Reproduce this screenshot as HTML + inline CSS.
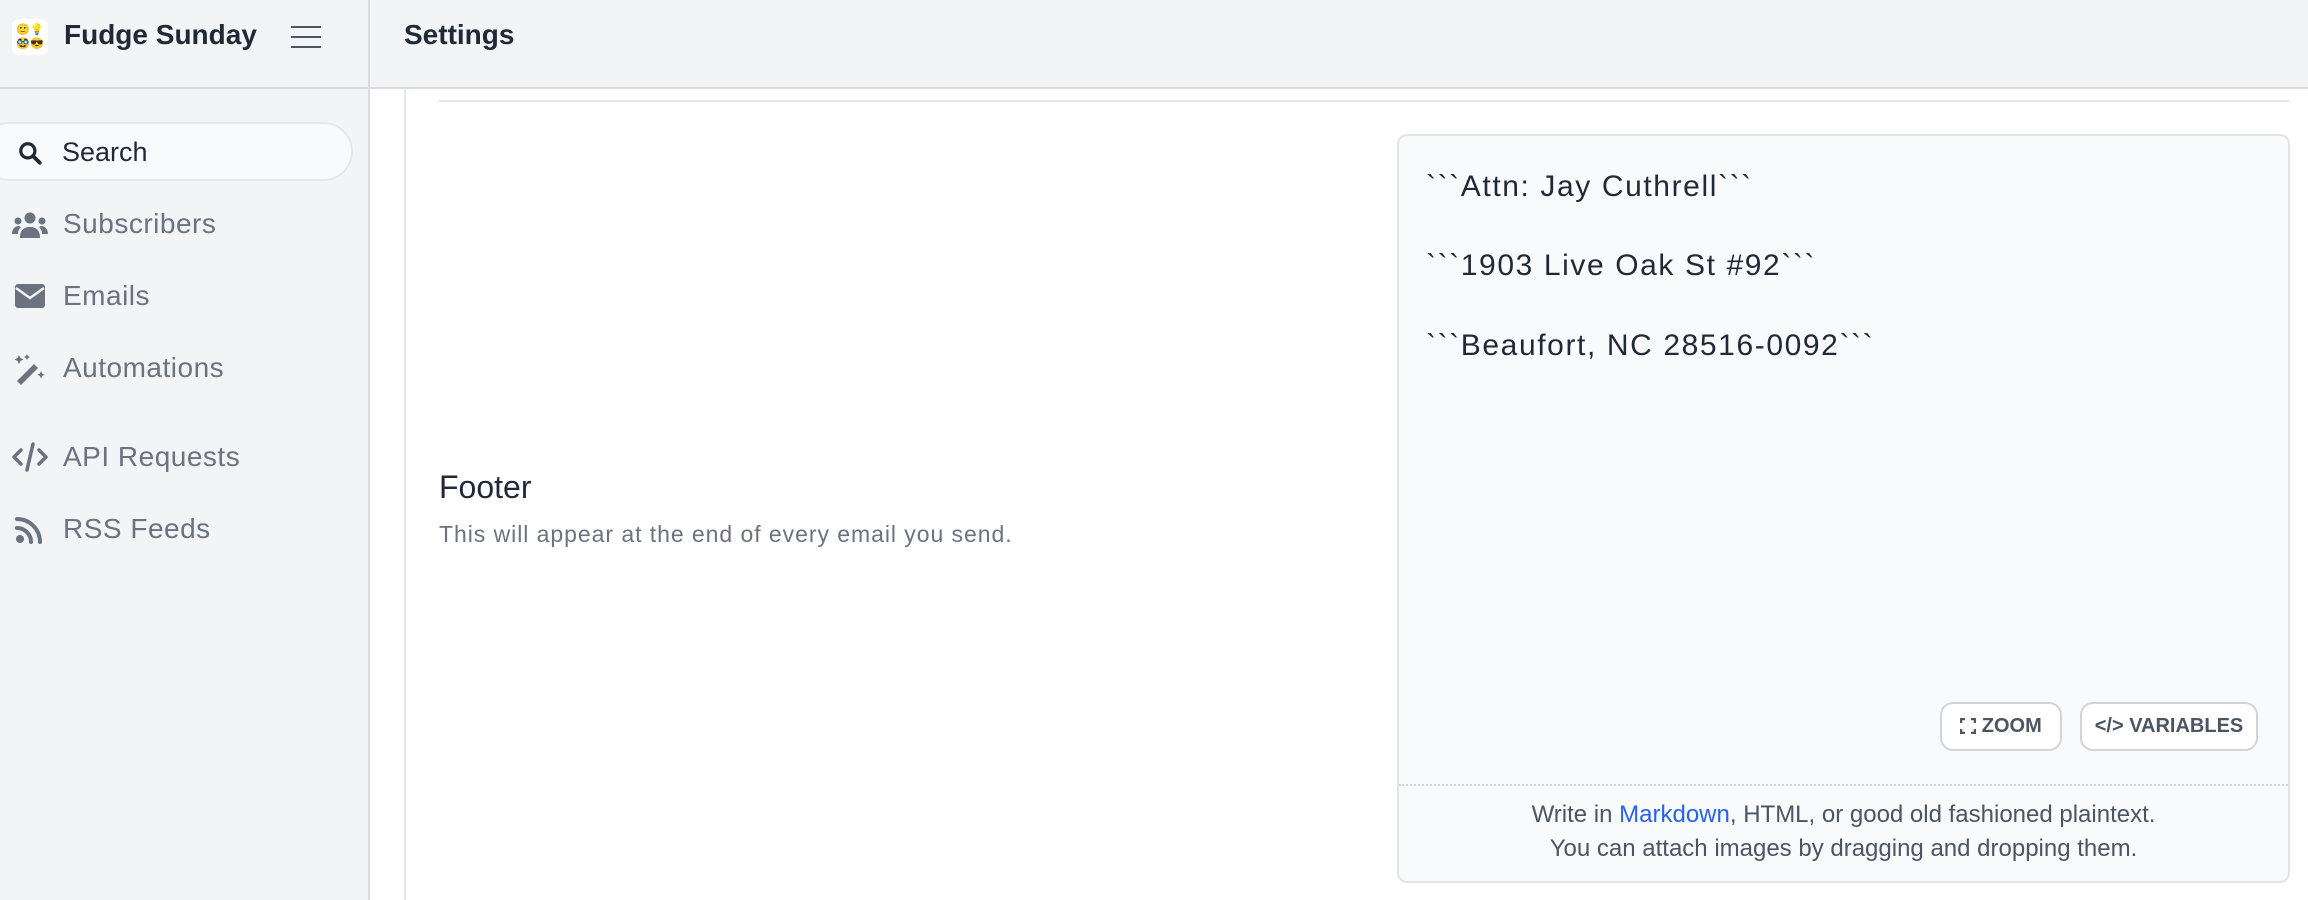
<!DOCTYPE html>
<html><head><meta charset="utf-8"><style>
*{box-sizing:border-box;margin:0;padding:0}
body{width:2308px;height:900px;overflow:hidden;background:#fff;font-family:"Liberation Sans",sans-serif;position:relative}
.hdr{position:absolute;left:0;top:0;width:2308px;height:89px;background:#f3f4f6;border-bottom:2px solid #d9dce1}
.side{position:absolute;left:0;top:89px;width:370px;height:811px;background:#f3f4f6;border-right:2px solid #d9dce1}
.vdiv{position:absolute;left:368px;top:0;width:2px;height:89px;background:#d9dce1}
.logo{position:absolute;left:12px;top:19px;width:36px;height:36px;background:#fff;border-radius:7px;font-size:11px;line-height:14px;text-align:center;padding-top:4px}
.brand{position:absolute;left:64px;top:19px;font-size:28px;font-weight:bold;color:#1f2937}
.ham{position:absolute;left:291px;top:26px;width:30px}
.ham i{display:block;height:2px;background:#4b5563;margin-bottom:8px}
.title{position:absolute;left:404px;top:19px;font-size:28px;font-weight:bold;color:#1f2937}
.search{position:absolute;left:-20px;top:122px;width:373px;height:59px;border:2px solid #e5e7eb;border-radius:30px;background:#f9fafb}
.search span{position:absolute;left:80px;top:13px;font-size:27px;color:#1f2937}
.nav{position:absolute;left:63px;font-size:28px;letter-spacing:0.5px;color:#6b7280}
.ic{position:absolute;left:12px}
.inner{position:absolute;left:404px;top:89px;width:2px;height:811px;background:#e5e7eb}
.hr{position:absolute;left:439px;top:100px;width:1850px;height:2px;background:#e5e7eb}
.lbl{position:absolute;left:439px;top:469px;font-size:32px;color:#1f2937}
.desc{position:absolute;left:439px;top:521px;font-size:23px;letter-spacing:0.95px;color:#6b7280}
.box{position:absolute;left:1397px;top:134px;width:893px;height:749px;background:#f9fafb;border:2px solid #e1e4e8;border-radius:10px}
.ln{position:absolute;left:27px;font-size:30px;letter-spacing:1.6px;color:#1f2937}
.btn{position:absolute;top:566px;height:49px;background:#fff;border:2px solid #d1d5db;border-radius:13px;font-size:20px;font-weight:bold;color:#4b5563;line-height:45px;text-align:center}
.dot{position:absolute;left:0;top:648px;width:100%;border-top:2px dotted #d1d5db}
.ft{position:absolute;left:0;width:100%;text-align:center;font-size:24px;color:#4b5563}
</style></head><body>
<div class="hdr"></div>
<div class="vdiv"></div>
<div class="logo">🙂💡<br>🥸😎</div>
<div class="brand">Fudge Sunday</div>
<div class="ham"><i></i><i></i><i></i></div>
<div class="title">Settings</div>
<div class="side"></div>
<div class="search">
<svg style="position:absolute;left:35px;top:16px" width="26" height="26" viewBox="0 0 24 24"><circle cx="10" cy="10" r="6.5" fill="none" stroke="#1f2937" stroke-width="3"/><path d="M15 15l6 6" stroke="#1f2937" stroke-width="3.5" stroke-linecap="round"/></svg>
<span>Search</span></div>
<svg class="ic" style="top:211px" width="36" height="28" viewBox="0 0 36 28"><circle cx="18" cy="7" r="5.5" fill="#6b7280"/><circle cx="6" cy="10" r="3.5" fill="#6b7280"/><circle cx="30" cy="10" r="3.5" fill="#6b7280"/><path d="M8 27c0-8 4-11 10-11s10 3 10 11z" fill="#6b7280"/><path d="M0 23c0-5 3-8 7-8l2 1c-2 2-3 4-3 7z M36 23c0-5-3-8-7-8l-2 1c2 2 3 4 3 7z" fill="#6b7280"/></svg>
<div class="nav" style="top:208px">Subscribers</div>
<svg class="ic" style="top:284px;left:15px" width="30" height="24" viewBox="0 0 30 24"><rect x="0" y="0" width="30" height="24" rx="3" fill="#6b7280"/><path d="M1 4l14 10 14-10" fill="none" stroke="#f3f4f6" stroke-width="2.5"/></svg>
<div class="nav" style="top:280px">Emails</div>
<svg class="ic" style="top:354px;left:14px" width="32" height="32" viewBox="0 0 32 32"><path d="M3 27l17-17 4 4-17 17z" fill="#6b7280"/><path d="M5 1l1.5 3 3 1.5-3 1.5L5 10 3.5 7 .5 5.5l3-1.5zM13 0l1 2 2 1-2 1-1 2-1-2-2-1 2-1zM27 17l1.2 2.5 2.5 1.2-2.5 1.2L27 24.5l-1.2-2.5-2.5-1.2 2.5-1.2z" fill="#6b7280"/></svg>
<div class="nav" style="top:352px">Automations</div>
<svg class="ic" style="top:442px" width="36" height="30" viewBox="0 0 36 30"><path d="M9 8L2 15l7 7M27 8l7 7-7 7M21 2l-6 26" fill="none" stroke="#6b7280" stroke-width="3.5" stroke-linecap="round" stroke-linejoin="round"/></svg>
<div class="nav" style="top:441px">API Requests</div>
<svg class="ic" style="top:516px;left:15px" width="28" height="28" viewBox="0 0 28 28"><circle cx="5" cy="23" r="4" fill="#6b7280"/><path d="M2 12a14 14 0 0 1 14 14M2 3a23 23 0 0 1 23 23" fill="none" stroke="#6b7280" stroke-width="4" stroke-linecap="round"/></svg>
<div class="nav" style="top:513px">RSS Feeds</div>
<div class="inner"></div>
<div class="hr"></div>
<div class="lbl">Footer</div>
<div class="desc">This will appear at the end of every email you send.</div>
<div class="box">
<div class="ln" style="top:34px">&#96;&#96;&#96;Attn: Jay Cuthrell&#96;&#96;&#96;</div>
<div class="ln" style="top:113px">&#96;&#96;&#96;1903 Live Oak St #92&#96;&#96;&#96;</div>
<div class="ln" style="top:193px">&#96;&#96;&#96;Beaufort, NC 28516-0092&#96;&#96;&#96;</div>
<div class="btn" style="left:541px;width:122px"><svg width="16" height="16" viewBox="0 0 16 16" style="vertical-align:-2px"><path d="M1 5V1h4M11 1h4v4M15 11v4h-4M5 15H1v-4" fill="none" stroke="#4b5563" stroke-width="2.5"/></svg> ZOOM</div>
<div class="btn" style="left:681px;width:178px">&lt;/&gt; VARIABLES</div>
<div class="dot"></div>
<div class="ft" style="top:665px">Write in <span style="color:#2563eb">Markdown</span>, HTML, or good old fashioned plaintext.</div>
<div class="ft" style="top:699px">You can attach images by dragging and dropping them.</div>
</div>
</body></html>
